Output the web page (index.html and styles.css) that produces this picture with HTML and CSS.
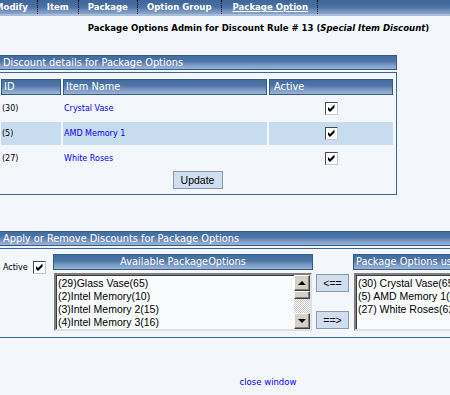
FILE: index.html
```html
<!DOCTYPE html>
<html lang="en">
<head>
  <meta charset="UTF-8">
  <title>Package Options Admin</title>
  <link rel="stylesheet" href="styles.css">
</head>
<body>
<div class="page">

  <!-- top tabs -->
  <div class="nav">
    <a class="nav-item first">Modify</a>
    <a class="nav-item">Item</a>
    <a class="nav-item">Package</a>
    <a class="nav-item">Option Group</a>
    <a class="nav-item current">Package Option</a>
    <span class="nav-item last"></span>
  </div>

  <h1 class="title">Package Options Admin for Discount Rule # 13 (<i>Special Item Discount</i>)</h1>

  <!-- discount details -->
  <div class="section sec1">
    <div class="sec-head">Discount details for Package Options</div>
    <div class="box">
      <table class="grid">
        <tr>
          <th class="c-id">ID</th>
          <th class="c-name">Item Name</th>
          <th class="c-act">Active</th>
        </tr>
        <tr>
          <td>(30)</td>
          <td><a href="#">Crystal Vase</a></td>
          <td class="center"><span class="cb"><svg viewBox="0 0 11 11" width="11" height="11"><polygon points="2,4 4,6 8.5,1.5 8.5,4.5 4,9 2,7"/></svg></span></td>
        </tr>
        <tr class="alt">
          <td>(5)</td>
          <td><a href="#">AMD Memory 1</a></td>
          <td class="center"><span class="cb"><svg viewBox="0 0 11 11" width="11" height="11"><polygon points="2,4 4,6 8.5,1.5 8.5,4.5 4,9 2,7"/></svg></span></td>
        </tr>
        <tr>
          <td>(27)</td>
          <td><a href="#">White Roses</a></td>
          <td class="center"><span class="cb"><svg viewBox="0 0 11 11" width="11" height="11"><polygon points="2,4 4,6 8.5,1.5 8.5,4.5 4,9 2,7"/></svg></span></td>
        </tr>
      </table>
      <div class="actions">
        <button class="btn update">Update</button>
      </div>
    </div>
  </div>

  <!-- apply / remove -->
  <div class="section sec2">
    <div class="sec-head">Apply or Remove Discounts for Package Options</div>
    <div class="box">
      <div class="apply">
        <div class="active-opt">
          <span>Active</span>
          <span class="cb"><svg viewBox="0 0 11 11" width="11" height="11"><polygon points="2,4 4,6 8.5,1.5 8.5,4.5 4,9 2,7"/></svg></span>
        </div>

        <div class="col-avail">
          <div class="list-head center">Available PackageOptions</div>
          <div class="listbox">
            <div class="opts">
              <div>(29)Glass Vase(65)</div>
              <div>(2)Intel Memory(10)</div>
              <div>(3)Intel Memory 2(15)</div>
              <div>(4)Intel Memory 3(16)</div>
            </div>
            <div class="vscroll">
              <span class="sb-btn"><svg viewBox="0 0 14 14" width="14" height="14"><polygon points="3,9 7,5 11,9"/></svg></span>
              <span class="sb-thumb"></span>
              <span class="sb-track"></span>
              <span class="sb-btn"><svg viewBox="0 0 14 14" width="14" height="14"><polygon points="3,5 11,5 7,9"/></svg></span>
            </div>
          </div>
        </div>

        <div class="col-move">
          <button class="btn move first">&lt;==</button>
          <button class="btn move">==&gt;</button>
        </div>

        <div class="col-used">
          <div class="list-head">Package Options used in Discount</div>
          <div class="listbox">
            <div class="opts">
              <div>(30) Crystal Vase(65)</div>
              <div>(5) AMD Memory 1(60)</div>
              <div>(27) White Roses(62)</div>
            </div>
          </div>
        </div>
      </div>
    </div>
  </div>

  <div class="close"><a href="#">close window</a></div>

</div>
</body>
</html>
```

FILE: styles.css
```css
body {
  margin: 0;
  background-color: #f3f6fa;
  font-family: "DejaVu Sans", sans-serif;
  font-size: 8px;
  color: #000;
  overflow: hidden;
}
a {
  color: #0000ff;
  text-decoration: none;
}
.page {
  margin-left: -2px;
  width: 540px;
}
.center {
  text-align: center;
}

/* tabs */
.nav {
  display: flex;
  height: 14px;
  background: linear-gradient(#3f6599, #4a70a4 50%, #6f90bc 75%, #8aa6ca);
  border-bottom: 2px solid #a9bdd7;
}
.nav-item {
  font-family: "DejaVu Sans Condensed", "DejaVu Sans", sans-serif;
  font-stretch: condensed;
  font-weight: bold;
  font-size: 9.5px;
  line-height: 14px;
  color: #fff;
  padding: 0 9px;
  border-left: 1px dotted #000;
  white-space: nowrap;
}
.nav-item.first {
  border-left: none;
  margin-left: -3px;
  padding-left: 0;
}
.nav-item.current {
  text-decoration: underline;
  padding-left: 11px;
}
.nav-item.last {
  padding: 0;
}

.title {
  font-family: "DejaVu Sans Condensed", "DejaVu Sans", sans-serif;
  font-stretch: condensed;
  font-size: 9.5px;
  line-height: 12px;
  margin: 6px 0 0;
  padding-right: 19px;
  text-align: center;
}

/* sections */
.section {
  margin-top: 21px;
}
.sec1 {
  width: 399px;
}
.sec2 {
  width: 540px;
  margin-top: 36px;
}
.sec-head,
.grid th,
.list-head {
  background: linear-gradient(#446d9f, #4d75a7 40%, #7b99c2 70%, #9db5d4);
  border: 1px solid #2f5d93;
  color: #fff;
  font-size: 9.8px;
  font-weight: normal;
  white-space: nowrap;
}
.sec-head {
  height: 13px;
  line-height: 13px;
  padding-left: 4px;
  margin-bottom: 2px;
}
.box {
  border: 1px solid #33669c;
}
.sec1 .box {
  padding: 4px 0 5px;
}

.grid {
  border-spacing: 2px;
  table-layout: fixed;
  width: 396px;
}
.grid th {
  height: 14px;
  padding: 0 2px;
  text-align: left;
  line-height: 14px;
}
.grid th.c-act {
  padding-left: 4px;
}
.c-id { width: 54px; }
.c-name { width: 198px; }
.grid td {
  height: 23px;
  padding: 0 1px;
  vertical-align: middle;
}
.grid tr.alt td {
  background-color: #c8dcef;
}

.cb {
  display: inline-block;
  width: 11px;
  height: 11px;
  border: 1px solid;
  border-color: #4a4a4a #c8c8c8 #c8c8c8 #4a4a4a;
  background-color: #fff;
  vertical-align: middle;
}
.cb svg {
  display: block;
}

.actions {
  text-align: center;
  margin-top: -1px;
}
.btn {
  font-family: "Liberation Sans", sans-serif;
  font-size: 10.5px;
  height: 18px;
  padding: 0;
  border: 1px solid #8a99ac;
  background-color: #cfdff0;
  background-image: radial-gradient(#a8c0dc 0.6px, transparent 0.7px);
  background-size: 2px 2px;
  color: #000;
}
.update {
  width: 50px;
}

/* apply / remove */
.apply {
  display: flex;
  align-items: flex-start;
  padding: 5px 0 6px 4px;
}
.apply > div {
  flex-shrink: 0;
}
.active-opt {
  display: flex;
  align-items: center;
  gap: 5px;
  width: 43px;
  margin: 7px 7px 0 0;
}
.col-avail {
  width: 260px;
}
.list-head {
  height: 14px;
  line-height: 14px;
  margin-bottom: 3px;
}
.col-used .list-head {
  padding-left: 2px;
}
.listbox {
  display: flex;
  height: 54px;
  margin: 0 1px;
  border: 2px solid;
  border-color: #7f7f7f #e0e0e0 #e0e0e0 #7f7f7f;
  box-shadow: inset 1px 1px #3c3c3c;
  background-color: #fafbfc;
  overflow: hidden;
}
.opts {
  flex: 1;
  padding: 2px 0 0 2px;
  font-family: "Liberation Sans", sans-serif;
  font-size: 10.5px;
  line-height: 13px;
  white-space: nowrap;
}
.vscroll {
  display: flex;
  flex-direction: column;
  width: 16px;
}
.sb-btn,
.sb-thumb {
  display: block;
  box-sizing: border-box;
  background-color: #d4d0c8;
  border: 1px solid;
  border-color: #fff #404040 #404040 #fff;
  box-shadow: inset -1px -1px #808080;
}
.sb-btn {
  height: 16px;
}
.sb-btn svg {
  display: block;
}
.sb-thumb {
  height: 8px;
}
.sb-track {
  flex: 1;
  background: repeating-conic-gradient(#c4c4c4 0 25%, #fff 0 50%) 0 0 / 2px 2px;
}

.col-move {
  display: flex;
  flex-direction: column;
  width: 33px;
  margin-left: 3px;
}
.move {
  width: 33px;
  margin-top: 19px;
}
.move.first {
  margin-top: 20px;
}
.col-used {
  width: 200px;
  margin-left: 4px;
}

.close {
  text-align: center;
  margin-top: 38px;
  font-size: 8.5px;
  line-height: 12px;
}
```
